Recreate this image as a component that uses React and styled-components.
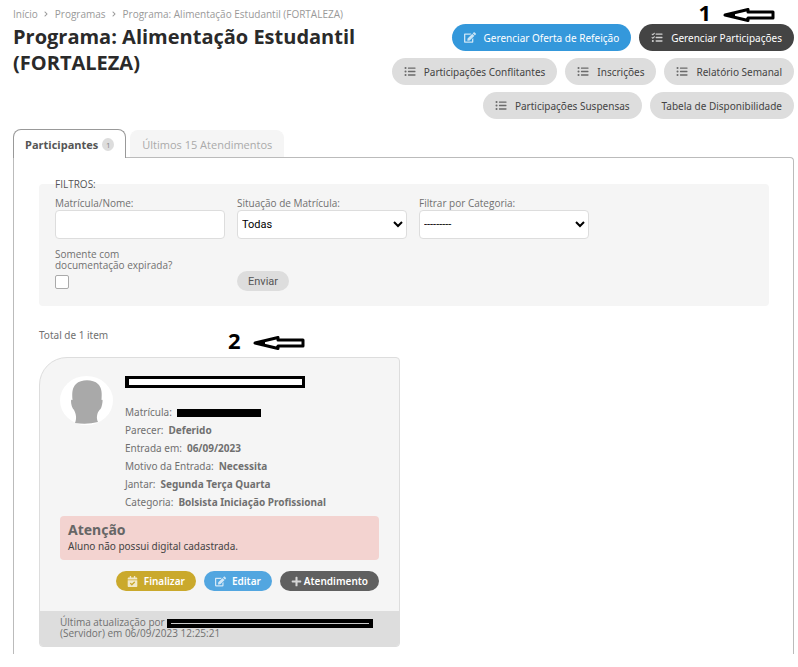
import React from "react";
import styled, { createGlobalStyle } from "styled-components";
import {
  FaEdit,
  FaListUl,
  FaTasks,
  FaCalendarCheck,
  FaPlus,
  FaChevronRight,
} from "react-icons/fa";

const GlobalStyle = createGlobalStyle`
  * { box-sizing: border-box; }
  body {
    margin: 0;
    background: #fff;
    color: #707070;
    font-family: "Open Sans", "Noto Sans", sans-serif;
    font-size: 10px;
    line-height: 18px;
  }
  h1, h2, p, dl, dd, ol { margin: 0; padding: 0; }
  a { color: inherit; text-decoration: none; }
  button { font-family: inherit; cursor: pointer; }
`;

const Page = styled.main`
  position: relative;
  padding: 6px 4px 14px 13px;
`;

const Breadcrumbs = styled.ol`
  display: flex;
  align-items: center;
  gap: 6px;
  list-style: none;
  font-size: 10px;
  line-height: 16px;
  color: #999;
`;

const Crumb = styled.li`
  display: flex;
  align-items: center;
  gap: 5px;
  svg { font-size: 6px; }
`;

const Header = styled.header`
  display: flex;
  align-items: flex-start;
  justify-content: space-between;
  margin-top: 2px;
`;

const Title = styled.h1`
  flex: 1 1 0;
  font-size: 20px;
  line-height: 26px;
  font-weight: 700;
  color: #2a2a2a;
`;

const Actions = styled.nav`
  flex: 0 1 53%;
  display: flex;
  flex-wrap: wrap;
  justify-content: flex-end;
  gap: 7px 8px;
`;

const tones = {
  primary: { bg: "#3498db", fg: "#fff" },
  dark: { bg: "#444", fg: "#fff" },
  plain: { bg: "#dddddd", fg: "#444" },
  warning: { bg: "#caa92c", fg: "#fff" },
  info: { bg: "#52a6e0", fg: "#fff" },
  muted: { bg: "#606060", fg: "#fff" },
};

const ActionLink = styled.a`
  display: flex;
  align-items: center;
  gap: 8px;
  height: 27px;
  padding: 0 12px;
  border-radius: 14px;
  font-family: "Noto Sans", "Open Sans", sans-serif;
  font-size: 10px;
  white-space: nowrap;
  background: ${(p) => tones[p.$tone].bg};
  color: ${(p) => tones[p.$tone].fg};
  svg { width: 12px; height: 11px; opacity: 0.75; }
`;

const Tabs = styled.div`
  display: flex;
  align-items: flex-end;
  gap: 4px;
  margin-top: 10px;
`;

const Tab = styled.button`
  display: flex;
  align-items: center;
  gap: 4px;
  height: ${(p) => (p.$active ? 29 : 27)}px;
  margin-bottom: ${(p) => (p.$active ? -1 : 0)}px;
  padding: 0 11px;
  border: 1px solid ${(p) => (p.$active ? "#999" : "#f5f5f5")};
  border-bottom: 0;
  border-radius: 8px 8px 0 0;
  background: ${(p) => (p.$active ? "#fff" : "#f5f5f5")};
  color: ${(p) => (p.$active ? "#555" : "#aaa")};
  font-size: 11px;
  font-weight: ${(p) => (p.$active ? 700 : 400)};
  z-index: 1;
`;

const Count = styled.span`
  display: grid;
  place-items: center;
  width: 12px;
  height: 13px;
  border-radius: 50%;
  background: #ddd;
  color: #888;
  font-size: 8px;
  font-weight: 400;
  line-height: 13px;
`;

const Panel = styled.section`
  padding: 20px 24px 7px 25px;
  border: 1px solid #bbb;
  border-bottom: 0;
  border-radius: 0 4px 0 0;
`;

const FilterSet = styled.fieldset`
  display: grid;
  grid-template-columns: repeat(auto-fill, 170px);
  gap: 10px 12px;
  margin: 0;
  padding: 8px 16px 15px;
  border: 0;
  border-radius: 4px;
  background: #f5f5f5;
  legend {
    padding: 0;
    line-height: 12px;
    color: #555;
  }
`;

const Field = styled.div`
  display: flex;
  flex-direction: column;
  align-items: flex-start;
  label {
    max-width: 126px;
    line-height: 11px;
    margin-bottom: 1px;
  }
  input[type="text"], select {
    width: 100%;
    height: 29px;
    padding: 0;
    border: 1px solid #ddd;
    border-radius: 4px;
    background: #fff;
    color: #000;
    font-family: Roboto, "Liberation Sans", sans-serif;
    font-size: 11px;
  }
  input[type="checkbox"] {
    appearance: none;
    width: 14px;
    height: 14px;
    margin: 3px 0 2px;
    border: 1px solid #aaa;
    border-radius: 2px;
    background: #fff;
  }
`;

const Submit = styled.button`
  align-self: flex-end;
  justify-self: start;
  height: 20px;
  padding: 0 11px;
  border: 0;
  border-radius: 10px;
  background: #ddd;
  color: #555;
  font-family: Roboto, "Liberation Sans", sans-serif;
  font-size: 11px;
`;

const Total = styled.p`
  margin: 20px 0 13px;
  font-family: "Noto Sans", "Open Sans", sans-serif;
`;

const Card = styled.article`
  width: 100%;
  max-width: 361px;
  overflow: hidden;
  border: 1px solid #ddd;
  border-radius: 28px 4px 4px 4px;
  background: #f5f5f5;
  font-family: "Noto Sans", "Open Sans", sans-serif;
`;

const CardBody = styled.div`
  padding: 18px 20px 20px;
`;

const Profile = styled.div`
  display: flex;
  align-items: flex-start;
  gap: 12px;
`;

const Avatar = styled.svg`
  width: 53px;
  height: 49px;
`;

const NameMask = styled.div`
  width: 180px;
  height: 12px;
  margin-bottom: 15px;
  border: 3px solid #000;
  border-left-width: 4px;
  background: #fff;
`;

const Facts = styled.dl`
  line-height: 18px;
`;

const Fact = styled.div`
  display: flex;
  align-items: center;
  gap: 5px;
  dd { font-weight: 700; }
`;

const Redaction = styled.span`
  display: inline-block;
  width: ${(p) => p.$width}px;
  height: ${(p) => (p.$lined ? 9 : 8)}px;
  border: 4px solid #000;
  background: #ccc;
  vertical-align: middle;
`;

const Alert = styled.div`
  margin-top: 5px;
  padding: 5px 8px 7px;
  border-radius: 4px;
  background: #f3d3d0;
  color: #444;
  h2 {
    font-size: 14px;
    line-height: 18px;
    color: #666;
  }
  p { line-height: 14px; }
`;

const CardActions = styled.div`
  display: flex;
  justify-content: flex-end;
  gap: 8px;
  margin-top: 11px;
`;

const CardButton = styled.button`
  display: flex;
  align-items: center;
  gap: ${(p) => (p.$tight ? 2 : 6)}px;
  height: 20px;
  padding: 0 11px;
  border: 0;
  border-radius: 10px;
  background: ${(p) => tones[p.$tone].bg};
  color: ${(p) => tones[p.$tone].fg};
  font-size: 10px;
  font-weight: 600;
  svg { width: 11px; height: 11px; opacity: 0.75; }
`;

const CardFooter = styled.footer`
  padding: 6px 20px 7px;
  background: #ddd;
  font-family: "Open Sans", "Noto Sans", sans-serif;
  line-height: 11px;
  p { white-space: nowrap; }
`;

const Callout = styled.div`
  position: absolute;
  top: ${(p) => p.$top}px;
  ${(p) => p.$side}: ${(p) => p.$offset}px;
  display: flex;
  align-items: center;
  gap: 12px;
  color: #000;
  font-size: 22px;
  font-weight: 700;
  line-height: 24px;
  svg { width: 52px; height: 14px; margin-top: 5px; }
`;

function Step({ number, ...place }) {
  return (
    <Callout {...place}>
      {number}
      <svg viewBox="0 0 52 14" aria-hidden="true">
        <path
          d="M2 7 L25 1.500 V4 H50 V10 H25 V12.500 Z"
          fill="#fff"
          stroke="#000"
          strokeWidth="3"
          strokeLinejoin="round"
        />
        <path d="M1 7 L12 4 V10 Z" fill="#000" />
      </svg>
    </Callout>
  );
}

const actions = [
  ["Gerenciar Oferta de Refeição", "primary", FaEdit],
  ["Gerenciar Participações", "dark", FaTasks],
  ["Participações Conflitantes", "plain", FaListUl],
  ["Inscrições", "plain", FaListUl],
  ["Relatório Semanal", "plain", FaListUl],
  ["Participações Suspensas", "plain", FaListUl],
  ["Tabela de Disponibilidade", "plain", null],
];

const facts = [
  ["Parecer:", "Deferido"],
  ["Entrada em:", "06/09/2023"],
  ["Motivo da Entrada:", "Necessita"],
  ["Jantar:", "Segunda Terça Quarta"],
  ["Categoria:", "Bolsista Iniciação Profissional"],
];

export default function App() {
  return (
    <>
      <GlobalStyle />
      <Page>
        <Breadcrumbs>
          <Crumb><a href="#inicio">Início</a><FaChevronRight /></Crumb>
          <Crumb><a href="#programas">Programas</a><FaChevronRight /></Crumb>
          <Crumb>Programa: Alimentação Estudantil (FORTALEZA)</Crumb>
        </Breadcrumbs>
        <Header>
          <Title>Programa: Alimentação Estudantil (FORTALEZA)</Title>
          <Actions>
            {actions.map(([label, tone, Icon]) => (
              <ActionLink key={label} href="#acao" $tone={tone}>
                {Icon && <Icon />}
                {label}
              </ActionLink>
            ))}
          </Actions>
        </Header>

        <Tabs role="tablist">
          <Tab type="button" role="tab" aria-selected="true" $active>
            Participantes <Count>1</Count>
          </Tab>
          <Tab type="button" role="tab" aria-selected="false">
            Últimos 15 Atendimentos
          </Tab>
        </Tabs>

        <Panel>
          <form>
            <FilterSet>
              <legend>FILTROS:</legend>
              <Field>
                <label htmlFor="nome">Matrícula/Nome:</label>
                <input id="nome" type="text" />
              </Field>
              <Field>
                <label htmlFor="situacao">Situação de Matrícula:</label>
                <select id="situacao"><option>Todas</option></select>
              </Field>
              <Field>
                <label htmlFor="categoria">Filtrar por Categoria:</label>
                <select id="categoria"><option>---------</option></select>
              </Field>
              <Field>
                <label htmlFor="expirada">Somente com documentação expirada?</label>
                <input id="expirada" type="checkbox" />
              </Field>
              <Submit type="button">Enviar</Submit>
            </FilterSet>
          </form>

          <Total>Total de 1 item</Total>

          <Card>
            <CardBody>
              <Profile>
                <Avatar viewBox="0 0 53 49" aria-hidden="true">
                  <ellipse cx="26.500" cy="24.500" rx="26.500" ry="24.500" fill="#fff" />
                  <path
                    d="M15 47 C17 42 16 38 14 34 C12 32 11 28 11 25 Q11 23 12.500 24 C12 17 12 12 16 8 C21 3 33 3 38 8 C42 12 42 17 41.500 24 Q43 23 42.500 26 C42 30 41 33 39.500 34 C37 37 36 42 38 46 Q27 49 15 47 Z"
                    fill="#a9a9a9"
                  />
                </Avatar>
                <div>
                  <NameMask />
                  <Facts>
                    <Fact><dt>Matrícula:</dt><dd><Redaction $width={84} /></dd></Fact>
                    {facts.map(([term, value]) => (
                      <Fact key={term}><dt>{term}</dt><dd>{value}</dd></Fact>
                    ))}
                  </Facts>
                </div>
              </Profile>
              <Alert>
                <h2>Atenção</h2>
                <p>Aluno não possui digital cadastrada.</p>
              </Alert>
              <CardActions>
                <CardButton type="button" $tone="warning"><FaCalendarCheck />Finalizar</CardButton>
                <CardButton type="button" $tone="info"><FaEdit />Editar</CardButton>
                <CardButton type="button" $tone="muted" $tight><FaPlus />Atendimento</CardButton>
              </CardActions>
            </CardBody>
            <CardFooter>
              <p>Última atualização por <Redaction $width={206} $lined /></p>
              <p>(Servidor) em 06/09/2023 12:25:21</p>
            </CardFooter>
          </Card>
        </Panel>

        <Step number="1" $top={0} $side="right" $offset={23} />
        <Step number="2" $top={328} $side="left" $offset={228} />
      </Page>
    </>
  );
}
